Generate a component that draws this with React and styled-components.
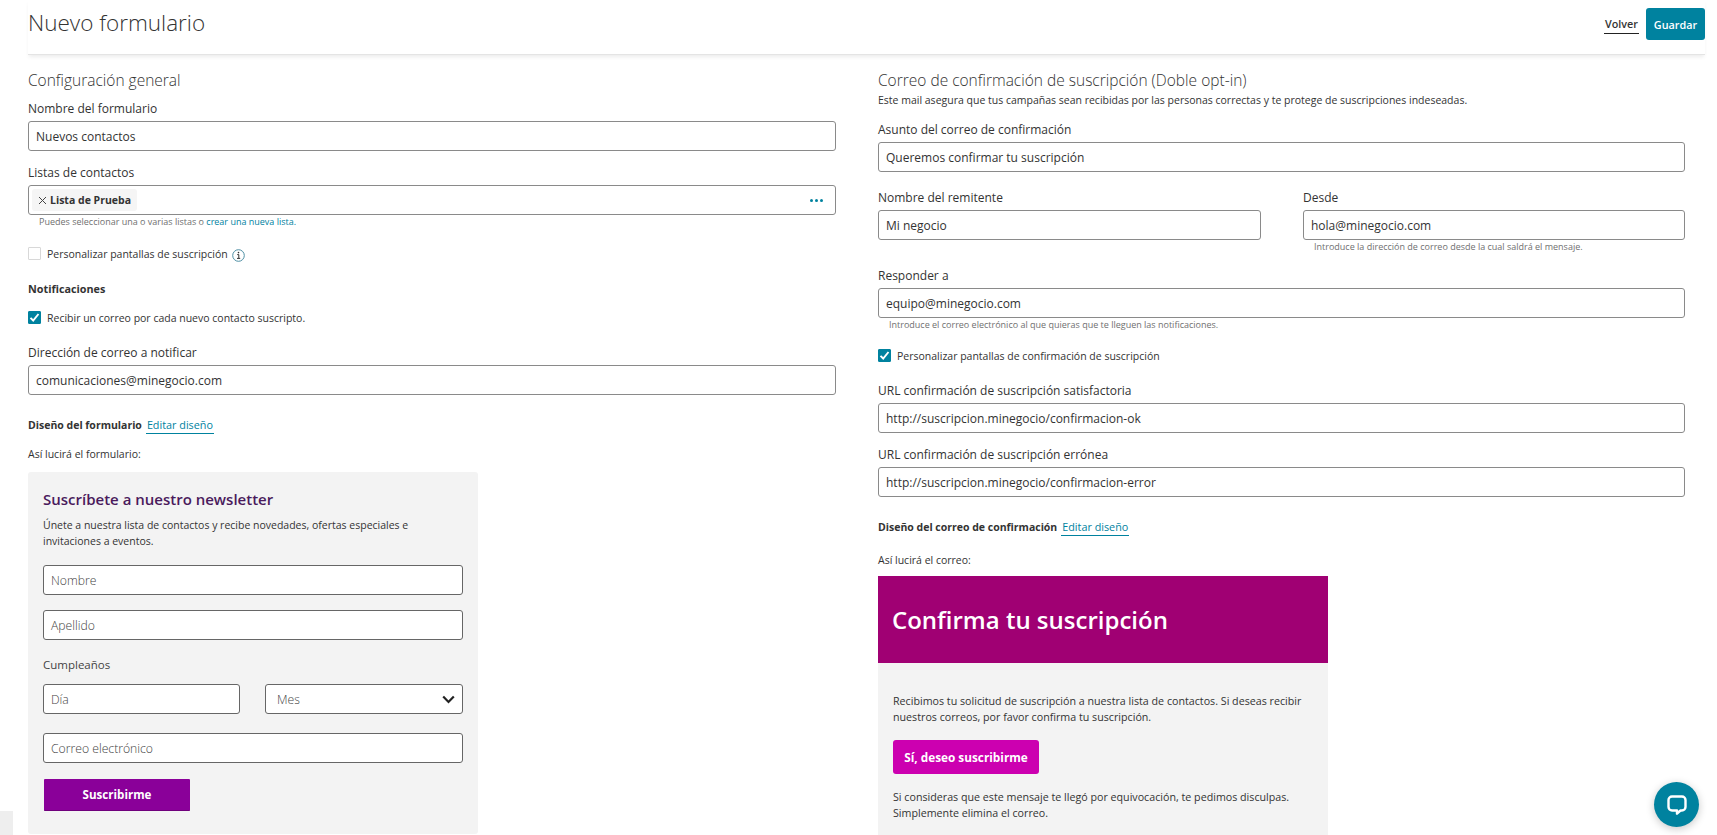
import styled, { createGlobalStyle } from 'styled-components';

const Global = createGlobalStyle`
  html, body { margin: 0; padding: 0; background: #fff; overflow: hidden; }
  body { font-family: 'Open Sans', sans-serif; color: #333; }
  * { box-sizing: border-box; }
`;

const teal = '#00829f';

const Page = styled.div`
  position: relative;
  height: 835px;
  overflow: hidden;
  padding: 0 12px 0 28px;
`;

const Header = styled.header`
  height: 55px;
  display: flex;
  align-items: flex-start;
  justify-content: space-between;
  padding-top: 8px;
  border-bottom: 1px solid #e4e4e4;
  box-shadow: 0 3px 4px -1px rgba(0, 0, 0, 0.08);
`;

const PageTitle = styled.h1`
  margin: 0;
  font-size: 22.5px;
  line-height: 30px;
  font-weight: 300;
  color: #333;
`;

const Actions = styled.div`
  display: flex;
  align-items: flex-start;
  gap: 7px;
`;

const BackLink = styled.a`
  font-size: 10.8px;
  font-weight: 600;
  line-height: 16px;
  padding: 8px 1px 1px;
  color: #333;
  border-bottom: 1px solid #222;
`;

const SaveButton = styled.button`
  width: 59px;
  height: 32px;
  padding: 0;
  border: 0;
  border-radius: 3px;
  background: ${teal};
  color: #fff;
  font: 600 10.8px 'Open Sans', sans-serif;
`;

const Columns = styled.div`
  display: grid;
  grid-template-columns: 808px 807px;
  column-gap: 42px;
  padding-top: 14px;
`;

const Column = styled.section`
  min-width: 0;
`;

const SectionTitle = styled.h2`
  margin: 0;
  font-size: 15.5px;
  line-height: 22px;
  font-weight: 300;
  color: #333;
`;

const Intro = styled.p`
  margin: 1px 0 0;
  font-size: 10.5px;
  line-height: 16px;
  color: #333;
`;

const Field = styled.div`
  margin-top: ${p => p.$top}px;
`;

const Label = styled.label`
  display: block;
  font-size: 12px;
  line-height: 18px;
  margin-bottom: 3px;
  color: #333;
`;

const Input = styled.div`
  height: 30px;
  display: flex;
  align-items: center;
  padding: 0 7px;
  background: #fff;
  border: 1px solid #8a8a8a;
  border-radius: 3px;
  font-size: 12px;
  color: #333;
`;

const TagInput = styled(Input)`
  padding: 0 12px 0 3px;
  justify-content: space-between;
`;

const Tag = styled.span`
  display: flex;
  align-items: center;
  gap: 3px;
  height: 22px;
  padding: 0 6px;
  border-radius: 3px;
  background: #f5f5f5;
  font-size: 10.5px;
  font-weight: 700;
`;

const Dots = styled.span`
  display: flex;
  gap: 2px;

  i {
    width: 3px;
    height: 3px;
    border-radius: 50%;
    background: ${teal};
  }
`;

const Help = styled.div`
  font-size: 9px;
  line-height: 14px;
  padding-left: 11px;
  color: #707070;

  a {
    color: ${teal};
  }
`;

const CheckRow = styled.div`
  display: flex;
  align-items: center;
  gap: 6px;
  height: 13px;
  margin-top: ${p => p.$top}px;
  font-size: 10.5px;
  color: #333;
`;

const Box = styled.span`
  flex: none;
  width: 13px;
  height: 13px;
  display: flex;
  align-items: center;
  justify-content: center;
  border-radius: 1px;
  background: ${p => (p.$on ? teal : '#fff')};
  border: 1px solid ${p => (p.$on ? teal : '#d8d8d8')};
`;

const Strong = styled.div`
  margin-top: 21px;
  font-size: 10.8px;
  line-height: 16px;
  font-weight: 700;
  color: #333;
`;

const DesignRow = styled.div`
  display: flex;
  align-items: flex-start;
  gap: 4px;
  height: 17px;
  margin-top: 22px;
  font-size: 10.5px;
  line-height: 16px;
  font-weight: 700;
  color: #333;
`;

const EditLink = styled.a`
  height: 17px;
  padding: 0 1px;
  font-size: 10.8px;
  font-weight: 400;
  color: ${teal};
  border-bottom: 1px solid ${teal};
`;

const Note = styled.div`
  margin-top: ${p => p.$top}px;
  font-size: 10.5px;
  line-height: 16px;
  color: #333;
`;

const FormCard = styled.div`
  width: 450px;
  height: 362px;
  margin-top: 10px;
  padding: 16px 15px 0;
  border-radius: 3px;
  background: #f3f3f3;
`;

const CardTitle = styled.h3`
  margin: 0;
  font-size: 15px;
  line-height: 22px;
  font-weight: 600;
  color: #4a1a5c;
`;

const CardText = styled.p`
  margin: 7px 0 0;
  font-size: 10.5px;
  line-height: 16px;
  color: #333;
`;

const CardInput = styled(Input)`
  width: ${p => p.$width || '420px'};
  margin-top: ${p => p.$top}px;
  border-color: #666;
  font-size: 12.2px;
  font-weight: 300;
  color: #444;
`;

const CardLabel = styled.div`
  margin-top: 16px;
  font-size: 11.5px;
  line-height: 18px;
  color: #444;
`;

const DateRow = styled.div`
  display: flex;
  justify-content: space-between;
  width: 420px;
  margin-top: 10px;
`;

const SelectInput = styled(CardInput)`
  justify-content: space-between;
  padding: 0 7px 0 11px;
`;

const SubscribeButton = styled.button`
  display: block;
  width: 146px;
  height: 32px;
  margin: 16px 0 0 1px;
  border: 0;
  border-bottom: 1px solid #6f007c;
  border-radius: 1px;
  background: #8a0099;
  color: #fff;
  font: 700 11.6px 'Open Sans', sans-serif;
`;

const SideRow = styled.div`
  display: grid;
  grid-template-columns: 383px 382px;
  column-gap: 42px;
  margin-top: 17px;

  ${Field} {
    margin-top: 0;
  }
`;

const GreyCorner = styled.div`
  position: absolute;
  left: 0;
  top: 811px;
  width: 13px;
  height: 24px;
  background: #eeeeee;
`;

const Mail = styled.div`
  width: 450px;
  margin-top: 8px;
`;

const MailBanner = styled.div`
  height: 87px;
  display: flex;
  align-items: center;
  padding-left: 14px;
  background: #a00073;
  color: #fff;
  font-size: 24px;
  font-weight: 600;
`;

const MailBody = styled.div`
  height: 172px;
  padding: 30px 15px 0;
  background: #f3f3f3;
`;

const MailText = styled.p`
  margin: ${p => p.$top}px 0 0;
  font-size: 10.7px;
  line-height: 16px;
  color: #333;
`;

const ConfirmButton = styled.button`
  display: block;
  width: 146px;
  height: 34px;
  margin-top: 15px;
  padding: 0;
  border: 0;
  border-radius: 3px;
  background: #cc00b0;
  color: #fff;
  font: 700 11.8px 'Open Sans', sans-serif;
`;

const ChatButton = styled.button`
  position: absolute;
  left: 1654px;
  top: 782px;
  width: 45px;
  height: 45px;
  padding: 0;
  display: flex;
  align-items: center;
  justify-content: center;
  border: 0;
  border-radius: 50%;
  background: ${teal};
  box-shadow: 0 2px 8px rgba(0, 0, 0, 0.22);
`;

const Check = () => (
  <svg width="11" height="11" viewBox="0 0 11 11">
    <path d="M1.5 5.8 L4.2 8.5 L9.5 2" fill="none" stroke="#fff" strokeWidth="1.9" />
  </svg>
);

const InfoIcon = () => (
  <svg width="13" height="13" viewBox="0 0 13 13" style={{ marginLeft: -2, marginTop: 3 }}>
    <circle cx="6.5" cy="6.5" r="5.8" fill="none" stroke="#4d8ea3" strokeWidth="1" />
    <path d="M5.2 5.6h1.6v3.7M5 9.4h3.2" fill="none" stroke="#333" strokeWidth="1" />
    <circle cx="6.5" cy="3.6" r="0.8" fill="#333" />
  </svg>
);

const CloseIcon = () => (
  <svg width="9" height="9" viewBox="0 0 9 9">
    <path d="M1 1 L8 8 M8 1 L1 8" stroke="#444" strokeWidth="1" />
  </svg>
);

const Chevron = () => (
  <svg width="13" height="9" viewBox="0 0 13 9">
    <path d="M1.2 1.5 L6.5 7 L11.8 1.5" fill="none" stroke="#222" strokeWidth="2.2" />
  </svg>
);

const ChatIcon = () => (
  <svg width="24" height="24" viewBox="0 0 24 24">
    <path
      d="M7 3.5h10a3.5 3.5 0 0 1 3.5 3.5v7a3.5 3.5 0 0 1-3.5 3.5h-1.5l-3.5 3.2v-3.2H7A3.5 3.5 0 0 1 3.5 14V7A3.5 3.5 0 0 1 7 3.5z"
      fill="none"
      stroke="#fff"
      strokeWidth="2.4"
      strokeLinejoin="round"
    />
  </svg>
);

function App() {
  return (
    <Page>
      <Global />
      <Header>
        <PageTitle>Nuevo formulario</PageTitle>
        <Actions>
          <BackLink>Volver</BackLink>
          <SaveButton>Guardar</SaveButton>
        </Actions>
      </Header>

      <Columns>
        <Column>
          <SectionTitle>Configuración general</SectionTitle>
          <Field $top={9}>
            <Label>Nombre del formulario</Label>
            <Input>Nuevos contactos</Input>
          </Field>
          <Field $top={13}>
            <Label>Listas de contactos</Label>
            <TagInput>
              <Tag><CloseIcon />Lista de Prueba</Tag>
              <Dots><i /><i /><i /></Dots>
            </TagInput>
            <Help>Puedes seleccionar una o varias listas o <a>crear una nueva lista.</a></Help>
          </Field>
          <CheckRow $top={18}>
            <Box />
            Personalizar pantallas de suscripción
            <InfoIcon />
          </CheckRow>
          <Strong>Notificaciones</Strong>
          <CheckRow $top={14}>
            <Box $on><Check /></Box>
            Recibir un correo por cada nuevo contacto suscripto.
          </CheckRow>
          <Field $top={20}>
            <Label>Dirección de correo a notificar</Label>
            <Input>comunicaciones@minegocio.com</Input>
          </Field>
          <DesignRow>
            Diseño del formulario
            <EditLink>Editar diseño</EditLink>
          </DesignRow>
          <Note $top={12}>Así lucirá el formulario:</Note>
          <FormCard>
            <CardTitle>Suscríbete a nuestro newsletter</CardTitle>
            <CardText>
              Únete a nuestra lista de contactos y recibe novedades, ofertas especiales e
              <br />
              invitaciones a eventos.
            </CardText>
            <CardInput $top={16}>Nombre</CardInput>
            <CardInput $top={15}>Apellido</CardInput>
            <CardLabel>Cumpleaños</CardLabel>
            <DateRow>
              <CardInput $top={0} $width="197px">Día</CardInput>
              <SelectInput $top={0} $width="198px">Mes<Chevron /></SelectInput>
            </DateRow>
            <CardInput $top={19}>Correo electrónico</CardInput>
            <SubscribeButton>Suscribirme</SubscribeButton>
          </FormCard>
        </Column>

        <Column>
          <SectionTitle>Correo de confirmación de suscripción (Doble opt-in)</SectionTitle>
          <Intro>Este mail asegura que tus campañas sean recibidas por las personas correctas y te protege de suscripciones indeseadas.</Intro>
          <Field $top={13}>
            <Label>Asunto del correo de confirmación</Label>
            <Input>Queremos confirmar tu suscripción</Input>
          </Field>
          <SideRow>
            <Field>
              <Label>Nombre del remitente</Label>
              <Input>Mi negocio</Input>
            </Field>
            <Field>
              <Label>Desde</Label>
              <Input>hola@minegocio.com</Input>
              <Help>Introduce la dirección de correo desde la cual saldrá el mensaje.</Help>
            </Field>
          </SideRow>
          <Field $top={13}>
            <Label>Responder a</Label>
            <Input>equipo@minegocio.com</Input>
            <Help>Introduce el correo electrónico al que quieras que te lleguen las notificaciones.</Help>
          </Field>
          <CheckRow $top={17}>
            <Box $on><Check /></Box>
            Personalizar pantallas de confirmación de suscripción
          </CheckRow>
          <Field $top={20}>
            <Label>URL confirmación de suscripción satisfactoria</Label>
            <Input>http://suscripcion.minegocio/confirmacion-ok</Input>
          </Field>
          <Field $top={13}>
            <Label>URL confirmación de suscripción errónea</Label>
            <Input>http://suscripcion.minegocio/confirmacion-error</Input>
          </Field>
          <DesignRow>
            Diseño del correo de confirmación
            <EditLink>Editar diseño</EditLink>
          </DesignRow>
          <Note $top={16}>Así lucirá el correo:</Note>
          <Mail>
            <MailBanner>Confirma tu suscripción</MailBanner>
            <MailBody>
              <MailText $top={0}>
                Recibimos tu solicitud de suscripción a nuestra lista de contactos. Si deseas recibir
                <br />
                nuestros correos, por favor confirma tu suscripción.
              </MailText>
              <ConfirmButton>Sí, deseo suscribirme</ConfirmButton>
              <MailText $top={15}>
                Si consideras que este mensaje te llegó por equivocación, te pedimos disculpas.
                <br />
                Simplemente elimina el correo.
              </MailText>
            </MailBody>
          </Mail>
        </Column>
      </Columns>

      <GreyCorner />
      <ChatButton aria-label="Chat"><ChatIcon /></ChatButton>
    </Page>
  );
}

export default App;
